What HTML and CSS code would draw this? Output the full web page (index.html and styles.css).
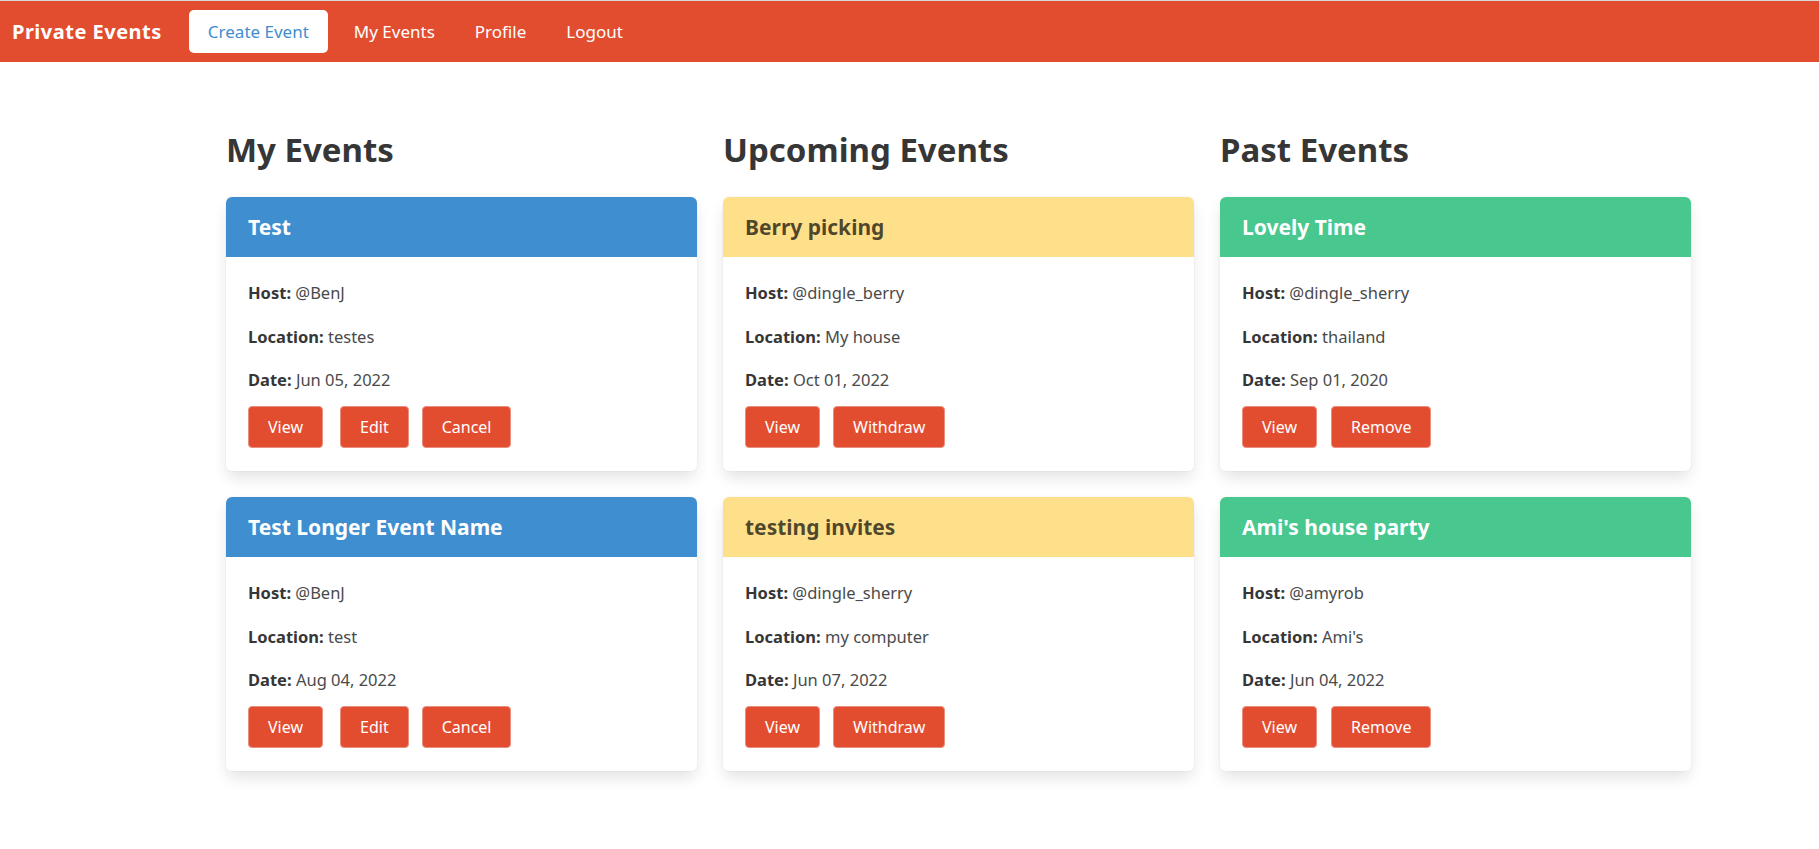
FILE: index.html
```html
<!DOCTYPE html>
<html lang="en">
<head>
<meta charset="utf-8">
<title>Private Events</title>
<link rel="stylesheet" href="styles.css">
</head>
<body>
<nav class="navbar">
  <a class="brand" href="#">Private Events</a>
  <a class="nav-item nav-primary" href="#">Create Event</a>
  <a class="nav-item" href="#">My Events</a>
  <a class="nav-item" href="#">Profile</a>
  <a class="nav-item" href="#">Logout</a>
</nav>

<main class="board">
  <section class="column">
    <h2 class="column-title">My Events</h2>
    <div class="card-list">
      <article class="card">
        <header class="card-header info">Test</header>
        <div class="card-body">
          <p><b>Host:</b> @BenJ</p>
          <p><b>Location:</b> testes</p>
          <p><b>Date:</b> Jun 05, 2022</p>
          <div class="actions owner">
            <a class="btn" href="#">View</a>
            <a class="btn" href="#">Edit</a>
            <a class="btn" href="#">Cancel</a>
          </div>
        </div>
      </article>
      <article class="card">
        <header class="card-header info">Test Longer Event Name</header>
        <div class="card-body">
          <p><b>Host:</b> @BenJ</p>
          <p><b>Location:</b> test</p>
          <p><b>Date:</b> Aug 04, 2022</p>
          <div class="actions owner">
            <a class="btn" href="#">View</a>
            <a class="btn" href="#">Edit</a>
            <a class="btn" href="#">Cancel</a>
          </div>
        </div>
      </article>
    </div>
  </section>

  <section class="column">
    <h2 class="column-title">Upcoming Events</h2>
    <div class="card-list">
      <article class="card">
        <header class="card-header warning">Berry picking</header>
        <div class="card-body">
          <p><b>Host:</b> @dingle_berry</p>
          <p><b>Location:</b> My house</p>
          <p><b>Date:</b> Oct 01, 2022</p>
          <div class="actions">
            <a class="btn" href="#">View</a>
            <a class="btn" href="#">Withdraw</a>
          </div>
        </div>
      </article>
      <article class="card">
        <header class="card-header warning">testing invites</header>
        <div class="card-body">
          <p><b>Host:</b> @dingle_sherry</p>
          <p><b>Location:</b> my computer</p>
          <p><b>Date:</b> Jun 07, 2022</p>
          <div class="actions">
            <a class="btn" href="#">View</a>
            <a class="btn" href="#">Withdraw</a>
          </div>
        </div>
      </article>
    </div>
  </section>

  <section class="column">
    <h2 class="column-title">Past Events</h2>
    <div class="card-list">
      <article class="card">
        <header class="card-header success">Lovely Time</header>
        <div class="card-body">
          <p><b>Host:</b> @dingle_sherry</p>
          <p><b>Location:</b> thailand</p>
          <p><b>Date:</b> Sep 01, 2020</p>
          <div class="actions past">
            <a class="btn" href="#">View</a>
            <a class="btn" href="#">Remove</a>
          </div>
        </div>
      </article>
      <article class="card">
        <header class="card-header success">Ami's house party</header>
        <div class="card-body">
          <p><b>Host:</b> @amyrob</p>
          <p><b>Location:</b> Ami's</p>
          <p><b>Date:</b> Jun 04, 2022</p>
          <div class="actions past">
            <a class="btn" href="#">View</a>
            <a class="btn" href="#">Remove</a>
          </div>
        </div>
      </article>
    </div>
  </section>
</main>
</body>
</html>
```

FILE: styles.css
```css
* { box-sizing: border-box; }

html, body {
  margin: 0;
  padding: 0;
  background: #ffffff;
}

body {
  font-family: "Noto Sans", "Open Sans", sans-serif;
  font-size: 16px;
  color: #4a4a4a;
}

a { text-decoration: none; }

/* Navbar */
.navbar {
  display: flex;
  align-items: center;
  height: 62px;
  border-top: 1px solid #d9d9d9;
  background: #e34d2f;
  padding-left: 12px;
}

.brand {
  color: #ffffff;
  font-weight: 700;
  font-size: 20px;
  letter-spacing: 0.5px;
  margin-right: 27px;
}

.nav-item {
  color: #ffffff;
  font-size: 17px;
  padding: 0 20px;
  line-height: 43px;
}

.nav-primary {
  background: #ffffff;
  color: #3e8ed0;
  border-radius: 5px;
  width: 139px;
  text-align: center;
  padding: 0;
  margin-right: 6px;
}

/* Board */
.board {
  display: grid;
  grid-template-columns: repeat(3, 471px);
  column-gap: 26px;
  padding: 70px 0 60px 226px;
}

.column-title {
  margin: 0 0 29px 0;
  font-size: 33px;
  line-height: 36px;
  font-weight: 700;
  color: #363636;
}

.card-list {
  display: flex;
  flex-direction: column;
  gap: 26px;
}

.card {
  background: #ffffff;
  border-radius: 6px;
  box-shadow: 0 8px 16px -2px rgba(10, 10, 10, 0.12), 0 0 0 1px rgba(10, 10, 10, 0.02);
}

.card-header {
  height: 60px;
  display: flex;
  align-items: center;
  padding: 0 22px;
  font-size: 21px;
  font-weight: 700;
  border-radius: 6px 6px 0 0;
}

.card-header.info { background: #3e8ed0; color: #ffffff; }
.card-header.warning { background: #ffe08a; color: rgba(0, 0, 0, 0.7); }
.card-header.success { background: #48c78e; color: #ffffff; }

.card-body {
  padding: 24px 22px 23px 22px;
}

.card-body p {
  margin: 0 0 19.5px 0;
  font-size: 16.5px;
  line-height: 24px;
}

.card-body p b { color: #363636; }

.card-body p:nth-of-type(3) { margin-bottom: 14px; }

.actions {
  display: flex;
  gap: 13px;
}

.actions.owner .btn:first-child { margin-right: 4px; }
.actions.past { gap: 14px; }

.btn {
  display: inline-flex;
  align-items: center;
  justify-content: center;
  height: 42px;
  padding: 0 19px;
  background: #e34d2f;
  color: #ffffff;
  border: 1px solid #ea8f80;
  border-radius: 4px;
  font-size: 16px;
}
```
